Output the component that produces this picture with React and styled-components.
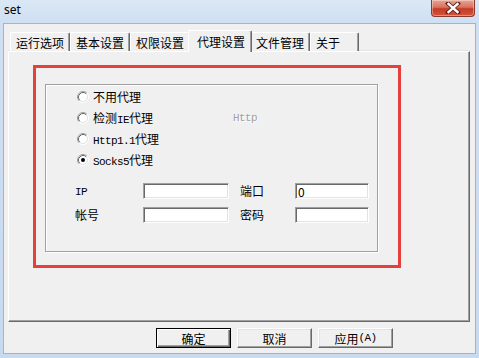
import React from "react";
import styled, { createGlobalStyle } from "styled-components";

const cjk = `"Noto Sans CJK SC", "Noto Sans", sans-serif`;
const mono = `"Liberation Mono", "DejaVu Sans Mono", monospace`;

const GlobalStyle = createGlobalStyle`
  html, body { margin: 0; padding: 0; background: #fff; }
  body { font-family: ${cjk}; font-size: 12px; color: #000; }
  * { box-sizing: border-box; }
`;

const Window = styled.div`
  width: 479px;
  height: 358px;
  display: flex;
  flex-direction: column;
  padding: 0 3px 4px 3px;
  background: linear-gradient(180deg, #dbe7f5 0px, #cfe0f2 22px, #c8daee 100%);
`;

const TitleBar = styled.div`
  height: 23px;
  flex: none;
  display: flex;
  align-items: flex-start;
  justify-content: space-between;
`;

const Title = styled.div`
  font-family: "Noto Sans", "Open Sans", sans-serif;
  font-size: 12px;
  line-height: 20px;
  margin-left: 1px;
  color: #000;
`;

const CloseButton = styled.div`
  width: 44px;
  height: 17px;
  margin-right: 1px;
  border: 1px solid #8d3a2e;
  border-top: none;
  border-radius: 0 0 4px 4px;
  background: linear-gradient(180deg, #e8a593 0%, #d9735f 45%, #c43b26 55%, #d5543c 100%);
  display: flex;
  align-items: center;
  justify-content: center;
  box-shadow: inset 0 0 0 1px rgba(255, 255, 255, 0.35);
`;

const Client = styled.div`
  flex: 1;
  display: flex;
  flex-direction: column;
  border: 1px solid #9fb4cd;
  background: #f0f0f0;
  padding: 6px 5px 5px 4px;
`;

const TabStrip = styled.div`
  height: 21px;
  display: flex;
  align-items: flex-end;
  padding-left: 2px;
  position: relative;
  z-index: 1;
`;

const Tab = styled.div`
  height: ${(p) => (p.$active ? "22px" : "19px")};
  margin: ${(p) => (p.$active ? "0 -2px -1px -2px" : "0")};
  min-width: ${(p) => p.$minWidth || "auto"};
  padding: ${(p) => (p.$active ? "0 6px 1px 8px" : "0 5px 0 5px")};
  border-top: 1px solid #fff;
  border-left: 1px solid #fff;
  border-right: 1px solid #696969;
  box-shadow: inset -1px 0 #a0a0a0;
  border-radius: 2px 2px 0 0;
  background: #f0f0f0;
  display: flex;
  align-items: center;
  font-family: ${cjk};
  font-size: 12px;
  white-space: nowrap;
  position: ${(p) => (p.$active ? "relative" : "static")};
  z-index: ${(p) => (p.$active ? 2 : "auto")};
`;

const TabPanel = styled.div`
  height: 271px;
  width: 462px;
  border-top: 1px solid #fff;
  border-left: 1px solid #fff;
  border-right: 1px solid #696969;
  border-bottom: 1px solid #696969;
  box-shadow: inset -1px -1px #a0a0a0, 0 -1px #e3e3e3;
  padding: 13px 0 0 24px;
`;

const Highlight = styled.div`
  width: 368px;
  height: 203px;
  border: 3px solid #e5403b;
  padding: 16px 20px 13px 9px;
  display: flex;
`;

const GroupBox = styled.div`
  flex: 1;
  border: 1px solid #a0a0a0;
  box-shadow: inset 1px 1px #fff, 1px 1px #fff;
  padding: 1px 0 0 29px;
  display: flex;
  flex-direction: column;
`;

const RadioList = styled.div`
  display: flex;
  flex-direction: column;
  margin-left: 2px;
`;

const RadioRow = styled.div`
  height: 21px;
  display: flex;
  align-items: center;
`;

const RadioOption = styled.label`
  width: 156px;
  flex: none;
  display: flex;
  align-items: center;
  gap: 4px;
  font-family: ${cjk};
  font-size: 12px;
`;

const Mono = styled.span`
  font-family: ${mono};
  font-size: 11px;
  letter-spacing: -0.6px;
`;

const Hint = styled.span`
  font-family: ${mono};
  font-size: 11px;
  letter-spacing: -0.6px;
  color: #a0a0a0;
  text-shadow: 1px 1px #fff;
`;

const FieldGrid = styled.div`
  margin-top: 13px;
  display: grid;
  grid-template-columns: 68px 97px 55px 74px;
  grid-auto-rows: 16px;
  row-gap: 8px;
  align-items: center;
`;

const FieldLabel = styled.span`
  font-family: ${cjk};
  font-size: 12px;
  line-height: 16px;
`;

const TextBox = styled.input`
  width: ${(p) => p.$w}px;
  height: 16px;
  margin: 0;
  padding: 0 2px;
  border: 1px solid;
  border-color: #a0a0a0 #fff #fff #a0a0a0;
  box-shadow: inset 1px 1px #696969, inset -1px -1px #e3e3e3;
  background: #fff;
  font-family: ${cjk};
  font-size: 12px;
  line-height: 14px;
  color: #000;
  outline: none;
`;

const ButtonRow = styled.div`
  margin-top: 6px;
  display: flex;
  gap: 6px;
  padding-left: 148px;
`;

const Button = styled.div`
  width: 75px;
  height: 20px;
  display: flex;
  align-items: center;
  justify-content: center;
  background: #f0f0f0;
  border: 1px solid;
  border-color: ${(p) => (p.$default ? "#000" : "#fff #696969 #696969 #fff")};
  box-shadow: ${(p) =>
    p.$default
      ? "inset 1px 1px #fff, inset -1px -1px #696969, inset -2px -2px #a0a0a0"
      : "inset -1px -1px #a0a0a0, inset 1px 1px #e3e3e3"};
  font-family: ${cjk};
  font-size: 12px;
`;

const Radio = ({ checked }) => (
  <svg width="12" height="12" viewBox="0 0 12 12" style={{ flex: "none" }}>
    <circle cx="6" cy="6" r="4.5" fill="#fff" />
    <path d="M2.11 9.89 A5.5 5.5 0 0 1 9.89 2.11" fill="none" stroke="#a0a0a0" strokeWidth="1" />
    <path d="M9.89 2.11 A5.5 5.5 0 0 1 2.11 9.89" fill="none" stroke="#fff" strokeWidth="1" />
    <path d="M2.82 9.18 A4.5 4.5 0 0 1 9.18 2.82" fill="none" stroke="#696969" strokeWidth="1" />
    <path d="M9.18 2.82 A4.5 4.5 0 0 1 2.82 9.18" fill="none" stroke="#e3e3e3" strokeWidth="1" />
    {checked && <circle cx="6" cy="6" r="2" fill="#000" />}
  </svg>
);

const CloseIcon = () => (
  <svg width="16" height="12" viewBox="0 0 16 12">
    <path d="M3 1.5 L13 10.5 M13 1.5 L3 10.5" stroke="#5a1a12" strokeWidth="4" strokeLinecap="square" />
    <path d="M3.5 2 L12.5 10 M12.5 2 L3.5 10" stroke="#fff" strokeWidth="2.4" strokeLinecap="square" />
  </svg>
);

const tabs = [
  { label: "运行选项" },
  { label: "基本设置" },
  { label: "权限设置" },
  { label: "代理设置", active: true },
  { label: "文件管理" },
  { label: "关于", minWidth: "49px" },
];

export default function App() {
  return (
    <>
      <GlobalStyle />
      <Window>
        <TitleBar>
          <Title>set</Title>
          <CloseButton>
            <CloseIcon />
          </CloseButton>
        </TitleBar>
        <Client>
          <TabStrip>
            {tabs.map((t) => (
              <Tab key={t.label} $active={t.active} $minWidth={t.minWidth}>
                {t.label}
              </Tab>
            ))}
          </TabStrip>
          <TabPanel>
            <Highlight>
              <GroupBox>
                <RadioList>
                  <RadioRow>
                    <RadioOption>
                      <Radio />
                      不用代理
                    </RadioOption>
                  </RadioRow>
                  <RadioRow>
                    <RadioOption>
                      <Radio />
                      <span>
                        检测<Mono>IE</Mono>代理
                      </span>
                    </RadioOption>
                    <Hint>Http</Hint>
                  </RadioRow>
                  <RadioRow>
                    <RadioOption>
                      <Radio />
                      <span>
                        <Mono>Http1.1</Mono>代理
                      </span>
                    </RadioOption>
                  </RadioRow>
                  <RadioRow>
                    <RadioOption>
                      <Radio checked />
                      <span>
                        <Mono>Socks5</Mono>代理
                      </span>
                    </RadioOption>
                  </RadioRow>
                </RadioList>
                <FieldGrid>
                  <FieldLabel>
                    <Mono>IP</Mono>
                  </FieldLabel>
                  <TextBox $w={86} defaultValue="" />
                  <FieldLabel>端口</FieldLabel>
                  <TextBox $w={74} defaultValue="0" />
                  <FieldLabel>帐号</FieldLabel>
                  <TextBox $w={86} defaultValue="" />
                  <FieldLabel>密码</FieldLabel>
                  <TextBox $w={74} defaultValue="" />
                </FieldGrid>
              </GroupBox>
            </Highlight>
          </TabPanel>
          <ButtonRow>
            <Button $default>确定</Button>
            <Button>取消</Button>
            <Button>
              应用<Mono>(A)</Mono>
            </Button>
          </ButtonRow>
        </Client>
      </Window>
    </>
  );
}
